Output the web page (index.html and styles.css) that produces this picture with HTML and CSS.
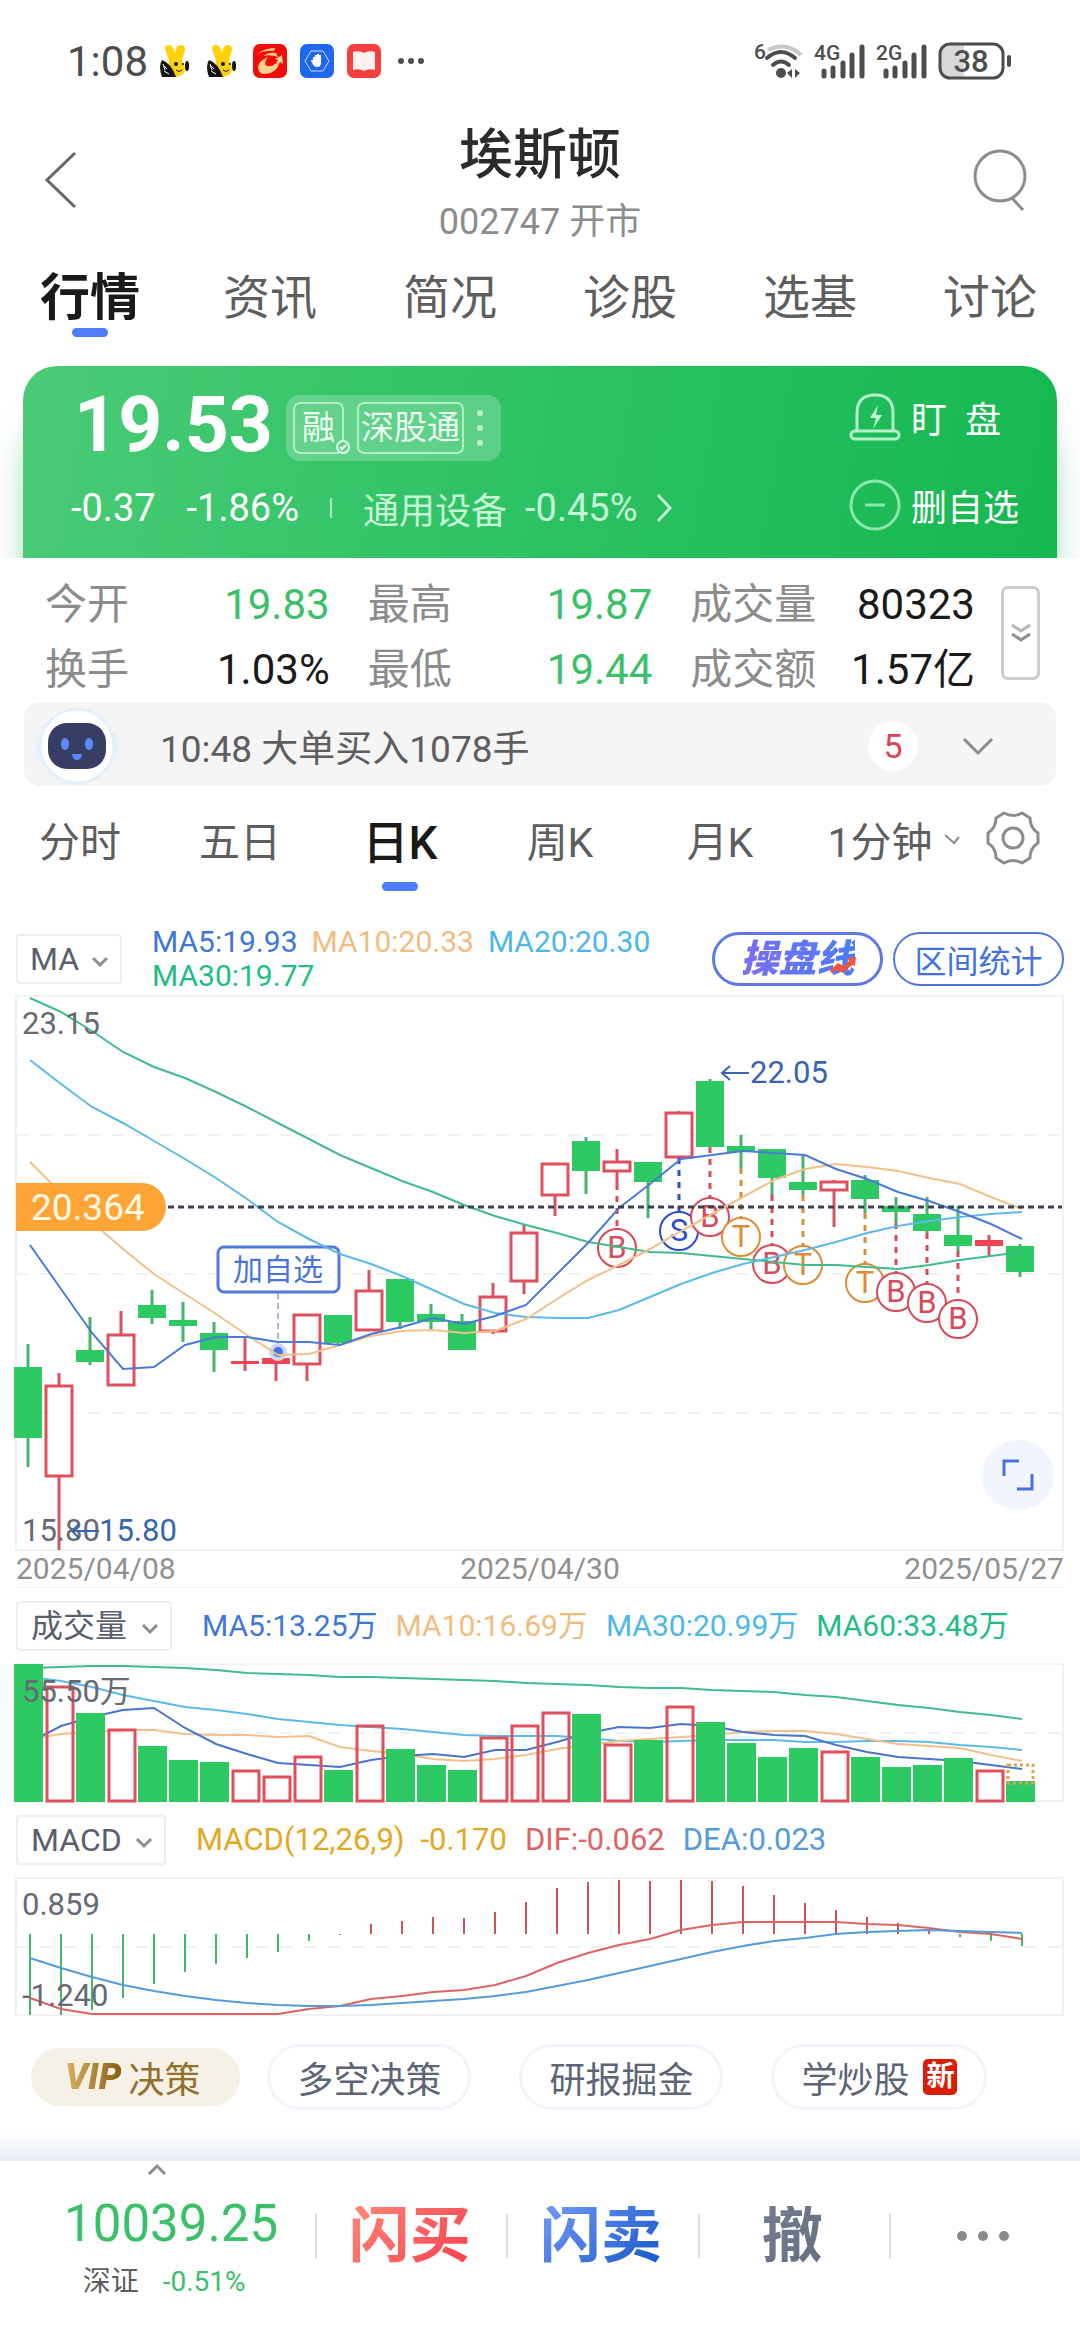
FILE: index.html
```html
<!DOCTYPE html>
<html lang="zh-CN">
<head>
    <meta charset="UTF-8">
    <meta name="viewport" content="width=device-width, initial-scale=1.0">
    <title>埃斯顿 002747</title>
    <link rel="stylesheet" href="styles.css">
</head>
<body>
    <div class="status-bar">
        <span class="clock">1:08</span>
        <div class="status-apps">
            <svg width="34" height="34" viewBox="0 0 34 34">
                <path d="M10 16 6 5Q6 1 10 1q4 0 6 8 1-8 6-8 5 1 4 5l-3 10 3 8q0 8-9 9H8Z" fill="#fdd20a"/>
                <path d="M3 16q9 3 14 17H3Q-1 22 3 16Z" fill="#111"/>
                <path d="M5 22l3 3M5 27l5 3M4 20l2 6" stroke="#fff" stroke-width="1"/>
                <ellipse cx="28" cy="22" rx="2" ry="5" fill="#111"/>
                <circle cx="17" cy="20" r="2" fill="#111"/><circle cx="24" cy="20" r="1" fill="#111"/>
                <path d="M17 26q3 3 6 0" stroke="#111" stroke-width="1" fill="none"/>
            </svg>
            <svg width="34" height="34" viewBox="0 0 34 34">
                <path d="M10 16 6 5Q6 1 10 1q4 0 6 8 1-8 6-8 5 1 4 5l-3 10 3 8q0 8-9 9H8Z" fill="#fdd20a"/>
                <path d="M3 16q9 3 14 17H3Q-1 22 3 16Z" fill="#111"/>
                <path d="M5 22l3 3M5 27l5 3M4 20l2 6" stroke="#fff" stroke-width="1"/>
                <ellipse cx="28" cy="22" rx="2" ry="5" fill="#111"/>
                <circle cx="17" cy="20" r="2" fill="#111"/><circle cx="24" cy="20" r="1" fill="#111"/>
                <path d="M17 26q3 3 6 0" stroke="#111" stroke-width="1" fill="none"/>
            </svg>
            <svg width="34" height="34" viewBox="0 0 34 34">
                <rect width="34" height="34" rx="7" fill="#f40b0b"/>
                <path d="M4 10Q12 4 22 4l-1 3Q12 6 4 10Z" fill="#ffd28a"/>
                <path d="M10 12q6-4 13-3l2 4q-7-3-15-1Z" fill="#ffd28a"/>
                <path d="M5 24q0-7 10-11-5 7-1 9 8 1 11-6l-3-1 7-4 1 9-3-2q-4 12-15 12-6 0-7-6Z" fill="#ffd28a"/>
            </svg>
            <svg width="34" height="34" viewBox="0 0 34 34">
                <rect width="34" height="34" rx="7" fill="#1f66f0"/>
                <path d="M11 7h12l6 10-6 10H11L5 17Z" fill="none" stroke="#cfe0ff" stroke-width="1"/>
                <path d="M13 16v-3h2v3-5h2v4-5h2v5-4h2v8q0 4-4 4-3 0-5-4l-1-3Z" fill="#fff"/>
            </svg>
            <svg width="34" height="34" viewBox="0 0 34 34">
                <rect width="34" height="34" rx="7" fill="#f6403f"/>
                <path d="M6 8q6-2 11 1 5-3 11-1v18q-6-2-11 1-5-3-11-1Z" fill="#fff1f0"/>
            </svg>
            <svg width="30" height="34" viewBox="0 0 30 34" fill="#4d4d4d">
                <circle cx="7" cy="17" r="3"/><circle cx="17" cy="17" r="3"/><circle cx="27" cy="17" r="3"/>
            </svg>
        </div>
        <div class="status-signals">
            <svg width="50" height="38" viewBox="0 0 50 38">
                <path d="M14 8q18-9 33 5" fill="none" stroke="#c8c8c8" stroke-width="4"/>
                <g fill="none" stroke="#4d4d4d" stroke-width="4" stroke-linecap="round">
                    <path d="M13 16q14-12 28 0M19 23q8-7 16 0"/>
                </g>
                <circle cx="27" cy="31" r="5" fill="#4d4d4d"/>
                <path d="M38 27v9l-5-5ZM41 27v9l5-5Z" fill="#4d4d4d"/>
                <text x="0" y="17" class="net-label">6</text>
            </svg>
            <svg width="52" height="38" viewBox="0 0 52 38">
                <path d="M10 29v5M19 26v8M29 21v13M38 13v21M48 5v29" stroke="#4d4d4d" stroke-width="5" stroke-linecap="round"/>
                <text x="0" y="18" class="net-label">4G</text>
            </svg>
            <svg width="52" height="38" viewBox="0 0 52 38">
                <path d="M10 29v5M19 26v8M29 21v13M38 13v21M48 5v29" stroke="#4d4d4d" stroke-width="5" stroke-linecap="round"/>
                <text x="0" y="18" class="net-label">2G</text>
            </svg>
            <svg width="74" height="38" viewBox="0 0 74 38">
                <path d="M12 2h14v34H12Q2 36 2 26V12Q2 2 12 2Z" fill="#d8d8d8"/>
                <rect x="2" y="2" width="63" height="34" rx="10" fill="none" stroke="#4d4d4d" stroke-width="3"/>
                <path d="M71 15v8" stroke="#4d4d4d" stroke-width="4" stroke-linecap="round"/>
                <text x="33" y="30" text-anchor="middle" class="battery-label">38</text>
            </svg>
        </div>
    </div>

    <header class="header">
        <button class="icon-btn" aria-label="返回">
            <svg width="34" height="58" viewBox="0 0 34 58"><path d="M31 2 3 29l28 27" fill="none" stroke="#666" stroke-width="3"/></svg>
        </button>
        <div class="header-title">
            <h1>埃斯顿</h1>
            <p>002747 开市</p>
        </div>
        <button class="icon-btn" aria-label="搜索">
            <svg width="56" height="64" viewBox="0 0 56 64" fill="none" stroke="#8c8c8c" stroke-width="3"><circle cx="28" cy="28" r="25"/><path d="M40 50l11 12"/></svg>
        </button>
    </header>

    <nav class="tabs">
        <a href="#" class="tab active">行情</a>
        <a href="#" class="tab">资讯</a>
        <a href="#" class="tab">简况</a>
        <a href="#" class="tab">诊股</a>
        <a href="#" class="tab">选基</a>
        <a href="#" class="tab">讨论</a>
    </nav>

    <section class="quote-wrap">
        <div class="quote">
            <div class="quote-main">
                <div class="quote-price">
                    <strong>19.53</strong>
                    <div class="tags">
                        <span class="tag tag-check">融
                            <svg width="14" height="14" viewBox="0 0 14 14"><circle cx="7" cy="7" r="6" fill="#62d28b" stroke="#e0fbe9" stroke-width="2"/><path d="M4 7l2 2 4-4" fill="none" stroke="#fff" stroke-width="2"/></svg>
                        </span>
                        <span class="tag">深股通</span>
                        <svg width="6" height="38" viewBox="0 0 6 38" fill="#b9f0cc"><circle cx="3" cy="4" r="3"/><circle cx="3" cy="19" r="3"/><circle cx="3" cy="34" r="3"/></svg>
                    </div>
                </div>
                <div class="quote-change">
                    <span>-0.37</span>
                    <span>-1.86%</span>
                    <i class="quote-sep"></i>
                    <a href="#" class="sector">
                        <span class="sector-name">通用设备</span>
                        <span>-0.45%</span>
                        <svg width="18" height="30" viewBox="0 0 18 30"><path d="M3 2l12 13L3 28" fill="none" stroke="#c5f5d5" stroke-width="3"/></svg>
                    </a>
                </div>
            </div>
            <div class="quote-actions">
                <button class="quote-btn">
                    <svg width="52" height="48" viewBox="0 0 52 48" fill="none" stroke="#b5f0c9" stroke-width="3">
                        <path d="M8 38V20Q8 2 26 2t18 18v18"/><rect x="2" y="38" width="48" height="8" rx="4"/>
                        <path d="M29 12l-8 13h6l-3 11 9-14h-6Z" fill="#c9f6d8" stroke="none"/>
                    </svg>
                    盯&ensp;盘
                </button>
                <button class="quote-btn">
                    <svg width="52" height="52" viewBox="0 0 52 52" fill="none" stroke="#8fe5ae" stroke-width="3"><circle cx="26" cy="26" r="24"/><path d="M16 26h20"/></svg>
                    删自选
                </button>
            </div>
        </div>
    </section>

    <section class="stats">
        <dl class="stats-grid">
            <div class="stat"><dt>今开</dt><dd class="down">19.83</dd></div>
            <div class="stat"><dt>最高</dt><dd class="down">19.87</dd></div>
            <div class="stat"><dt>成交量</dt><dd>80323</dd></div>
            <div class="stat"><dt>换手</dt><dd>1.03%</dd></div>
            <div class="stat"><dt>最低</dt><dd class="down">19.44</dd></div>
            <div class="stat"><dt>成交额</dt><dd>1.57亿</dd></div>
        </dl>
        <button class="stats-more" aria-label="展开">
            <svg width="22" height="20" viewBox="0 0 22 20" fill="none" stroke-width="3"><path d="M2 2l9 6 9-6" stroke="#b5b5b5"/><path d="M2 11l9 6 9-6" stroke="#8c8c8c"/></svg>
        </button>
    </section>

    <section class="notice">
        <svg width="88" height="80" viewBox="0 0 88 80">
            <rect x="2" y="28" width="10" height="26" rx="5" fill="#eaf1fe"/><rect x="76" y="28" width="10" height="26" rx="5" fill="#eaf1fe"/>
            <circle cx="44" cy="40" r="37" fill="#fff" stroke="#e6effd" stroke-width="3"/>
            <rect x="15" y="17" width="58" height="46" rx="19" fill="#383d66"/>
            <ellipse cx="32" cy="38" rx="4" ry="6" fill="#5b8cff"/><ellipse cx="56" cy="38" rx="4" ry="6" fill="#5b8cff"/>
            <path d="M39 48h10q-1 6-5 6t-5-6Z" fill="#5b8cff"/>
        </svg>
        <p>10:48 大单买入1078手</p>
        <span class="notice-count">5</span>
        <button class="icon-btn" aria-label="展开消息">
            <svg width="32" height="20" viewBox="0 0 32 20"><path d="M2 3l14 14L30 3" fill="none" stroke="#8c8c8c" stroke-width="3"/></svg>
        </button>
    </section>

    <nav class="periods">
        <a href="#" class="period">分时</a>
        <a href="#" class="period">五日</a>
        <a href="#" class="period active">日K</a>
        <a href="#" class="period">周K</a>
        <a href="#" class="period">月K</a>
        <a href="#" class="period period-more">1分钟
            <svg width="16" height="12" viewBox="0 0 16 12"><path d="M1 2l9 8 5-6" fill="none" stroke="#8c8c8c" stroke-width="2"/></svg>
        </a>
        <button class="icon-btn" aria-label="设置">
            <svg width="56" height="54" viewBox="0 0 56 54" fill="none" stroke="#8c8c8c" stroke-width="3" stroke-linejoin="round">
                <path d="M19 2q9 5 18 0l8 5q0 10 8 15v10q-8 5-8 15l-8 5q-9-5-18 0l-8-5q0-10-8-15V22q8-5 8-15Z"/>
                <circle cx="28" cy="27" r="10"/>
            </svg>
        </button>
    </nav>

    <div class="indicator-row ma-row">
        <label class="picker">
            <select aria-label="主图指标"><option>MA</option></select>
            <svg width="18" height="12" viewBox="0 0 18 12"><path d="M2 2l7 7 7-7" fill="none" stroke="#8c8c8c" stroke-width="3"/></svg>
        </label>
        <div class="legend legend-ma">
            <span class="c-blue">MA5:19.93</span>
            <span class="c-orange">MA10:20.33</span>
            <span class="c-sky">MA20:20.30</span>
            <span class="c-green">MA30:19.77</span>
        </div>
        <div class="pills">
            <button class="pill pill-line">
                <span>操盘线</span>
                <svg width="30" height="20" viewBox="0 0 30 20"><path d="M2 16l8-7 6 3 5-5-2-3 9-1-1 9-3-1-9 8-6-3-6 3Z" fill="#f4553f"/></svg>
            </button>
            <button class="pill">区间统计</button>
        </div>
    </div>

    <div class="chart-box">
        <svg id="kline" class="chart" viewBox="0 0 1048 555"></svg>
        <button class="expand" aria-label="全屏">
            <svg width="34" height="34" viewBox="0 0 34 34" fill="none" stroke="#4a72e0" stroke-width="3"><path d="M3 18V3h15M31 16v15H16"/></svg>
        </button>
    </div>
    <div class="dates">
        <time>2025/04/08</time>
        <time>2025/04/30</time>
        <time>2025/05/27</time>
    </div>

    <div class="indicator-row">
        <label class="picker picker-sub">
            <select aria-label="副图指标一"><option>成交量</option></select>
            <svg width="18" height="12" viewBox="0 0 18 12"><path d="M2 2l7 7 7-7" fill="none" stroke="#8c8c8c" stroke-width="3"/></svg>
        </label>
        <div class="legend">
            <span class="c-blue">MA5:13.25万</span>
            <span class="c-orange">MA10:16.69万</span>
            <span class="c-sky">MA30:20.99万</span>
            <span class="c-green">MA60:33.48万</span>
        </div>
    </div>
    <div class="chart-box">
        <svg id="volume" class="chart" viewBox="0 0 1048 138"></svg>
    </div>

    <div class="indicator-row">
        <label class="picker picker-sub">
            <select aria-label="副图指标二"><option>MACD</option></select>
            <svg width="18" height="12" viewBox="0 0 18 12"><path d="M2 2l7 7 7-7" fill="none" stroke="#8c8c8c" stroke-width="3"/></svg>
        </label>
        <div class="legend legend-macd">
            <span class="c-gold">MACD(12,26,9)&ensp;-0.170</span>
            <span class="c-red">DIF:-0.062</span>
            <span class="c-dea">DEA:0.023</span>
        </div>
    </div>
    <div class="chart-box">
        <svg id="macd" class="chart" viewBox="0 0 1048 138"></svg>
    </div>

    <div class="chips">
        <button class="chip chip-vip"><em>VIP</em>决策</button>
        <button class="chip">多空决策</button>
        <button class="chip">研报掘金</button>
        <button class="chip">学炒股<span class="chip-new">新</span></button>
    </div>

    <footer class="trade-bar">
        <a href="#" class="index">
            <svg width="20" height="12" viewBox="0 0 20 12"><path d="M2 10l8-8 8 8" fill="none" stroke="#8c8c8c" stroke-width="3"/></svg>
            <strong>10039.25</strong>
            <span class="index-sub"><span>深证</span><span class="down">-0.51%</span></span>
        </a>
        <button class="trade"><span class="trade-buy">闪买</span></button>
        <button class="trade"><span class="trade-sell">闪卖</span></button>
        <button class="trade"><span class="trade-cancel">撤</span></button>
        <button class="trade" aria-label="更多">
            <svg width="56" height="12" viewBox="0 0 56 12" fill="#8c8c8c"><circle cx="7" cy="6" r="5"/><circle cx="28" cy="6" r="5"/><circle cx="49" cy="6" r="5"/></svg>
        </button>
    </footer>

    <script src="charts.js"></script>
</body>
</html>
```
FILE: styles.css
```css
* {
    box-sizing: border-box;
}

body {
    margin: 0;
    background: #fff;
    color: #1a1a1a;
    font-family: Roboto, "Noto Sans CJK SC", sans-serif;
}

h1, p, dl, dd {
    margin: 0;
}

a {
    color: inherit;
    text-decoration: none;
}

button, select {
    font-family: inherit;
    color: inherit;
    background: none;
    border: none;
    margin: 0;
    padding: 0;
    cursor: pointer;
}

svg {
    display: block;
    flex: none;
    overflow: visible;
}

.icon-btn {
    display: flex;
    align-items: center;
    justify-content: center;
}

.down {
    color: #3bc069;
}

/* status bar */
.status-bar {
    display: flex;
    align-items: center;
    height: 92px;
    padding: 30px 68px 0 67px;
    color: #4d4d4d;
}

.clock {
    font-size: 42px;
    margin-right: 11px;
}

.status-apps {
    display: flex;
    gap: 13px;
}

.status-signals {
    display: flex;
    gap: 10px;
    margin-left: auto;
}

.net-label {
    font-size: 21px;
    font-weight: 500;
    fill: #4d4d4d;
}

.battery-label {
    font-size: 31px;
    font-weight: 500;
    fill: #4d4d4d;
}

/* header */
.header {
    display: flex;
    align-items: flex-start;
    justify-content: space-between;
    padding: 34px 44px 0;
}

.header .icon-btn {
    width: 72px;
    height: 108px;
}

.header .icon-btn:first-child {
    justify-content: flex-start;
}

.header-title {
    display: flex;
    flex-direction: column;
    gap: 14px;
    text-align: center;
}

.header-title h1 {
    font-size: 54px;
    line-height: 60px;
    font-weight: 500;
    color: #2b2b2b;
}

.header-title p {
    font-size: 36px;
    line-height: 44px;
    color: #8c8c8c;
}

.tabs {
    display: flex;
    padding-top: 24px;
}

.tab {
    flex: 1;
    display: flex;
    flex-direction: column;
    align-items: center;
    font-size: 47px;
    line-height: 60px;
    color: #5e5e5e;
}

.tab.active {
    font-size: 50px;
    font-weight: 700;
    color: #1a1a1a;
}

.tab.active::after,
.period.active::after {
    content: "";
    width: 36px;
    height: 9px;
    border-radius: 5px;
    background: #4f7df9;
}

/* quote card */
.quote-wrap {
    padding: 29px 23px 0;
    overflow: hidden;
}

.quote {
    display: flex;
    justify-content: space-between;
    padding: 26px 38px 28px 48px;
    border-radius: 34px 34px 0 0;
    background: linear-gradient(100deg, #4bcb76, #2fc365 45%, #14b850);
    box-shadow: 0 60px 36px -8px rgba(40, 170, 90, 0.6);
    color: #fff;
}

.quote-main {
    display: flex;
    flex-direction: column;
    gap: 25px;
    padding-top: 3px;
}

.quote-price {
    display: flex;
    align-items: center;
    gap: 13px;
    height: 66px;
}

.quote-price strong {
    padding-left: 3px;
    margin-bottom: 6px;
    font-size: 77px;
    line-height: 66px;
    font-weight: 700;
}

.tags {
    display: flex;
    align-items: center;
    gap: 13px;
    padding: 7px 18px 7px 7px;
    border-radius: 14px;
    background: rgba(255, 255, 255, 0.22);
}

.tag {
    position: relative;
    padding: 0 7px;
    border: 2px solid #b3edc7;
    border-radius: 7px;
    font-size: 33px;
    line-height: 48px;
    color: #ecfff3;
}

.tag:nth-child(2) {
    padding: 0 2px;
}

.tag-check svg {
    position: absolute;
    right: -8px;
    bottom: -2px;
}

.quote-change {
    display: flex;
    align-items: center;
    gap: 31px;
    height: 44px;
    font-size: 38px;
}

.quote-sep {
    width: 2px;
    height: 20px;
    background: #a6e9bd;
}

.sector {
    display: flex;
    align-items: center;
    gap: 18px;
    color: #c5f5d5;
}

.sector-name {
    font-size: 36px;
}

.quote-actions {
    display: flex;
    flex-direction: column;
    gap: 38px;
}

.quote-btn {
    display: flex;
    align-items: center;
    gap: 10px;
    height: 50px;
    font-size: 36px;
    color: #fff;
}

/* stats */
.stats {
    display: flex;
    align-items: flex-start;
    gap: 26px;
    padding: 14px 40px 0 45px;
}

.stats-grid {
    flex: 1;
    display: grid;
    grid-template-columns: repeat(3, 1fr);
    column-gap: 38px;
}

.stat {
    display: flex;
    justify-content: space-between;
    line-height: 65px;
}

.stat dt {
    font-size: 42px;
    color: #8c8c8c;
}

.stat dd {
    font-size: 42px;
}

.stats-more {
    display: flex;
    align-items: center;
    justify-content: center;
    width: 39px;
    height: 94px;
    margin-top: 14px;
    border: 3px solid #ccc;
    border-radius: 7px;
}

/* notice */
.notice {
    display: flex;
    align-items: center;
    height: 84px;
    margin: 0 24px;
    padding: 4px 62px 0 9px;
    border-radius: 16px;
    background: #f5f5f5;
}

.notice p {
    flex: 1;
    margin-left: 39px;
    font-size: 37px;
    color: #5e5e5e;
}

.notice-count {
    width: 50px;
    margin-right: 44px;
    border-radius: 50%;
    background: #fff;
    font-size: 34px;
    line-height: 50px;
    text-align: center;
    color: #dd4455;
}

/* period tabs */
.periods {
    display: grid;
    grid-template-columns: repeat(6, 4fr) 3fr;
    align-items: start;
    padding-top: 27px;
    height: 106px;
}

.period {
    display: flex;
    flex-direction: column;
    align-items: center;
    gap: 9px;
    font-size: 41px;
    line-height: 60px;
    color: #5e5e5e;
}

.period.active {
    font-size: 46px;
    font-weight: 500;
    color: #1a1a1a;
}

.period-more {
    position: relative;
}

.period-more svg {
    position: absolute;
    right: 0;
    top: 20px;
}

.periods .icon-btn {
    height: 50px;
    padding-right: 14px;
}

/* indicator header rows */
.indicator-row {
    display: flex;
    align-items: center;
    gap: 30px;
    height: 76px;
    padding: 0 16px;
}

.ma-row {
    height: 68px;
    margin: 33px 0 3px;
}

.picker {
    position: relative;
    flex: none;
}

.picker select {
    appearance: none;
    height: 50px;
    padding: 0 40px 0 12px;
    border: 2px solid #eceef3;
    border-radius: 4px;
    font-size: 32px;
    color: #5a5f6e;
}

.picker-sub select {
    padding: 0 42px 0 13px;
}

.picker svg {
    position: absolute;
    right: 13px;
    top: 22px;
    pointer-events: none;
}

.legend {
    display: flex;
    flex-wrap: wrap;
    column-gap: 18px;
    font-size: 30px;
    line-height: 34px;
}

.legend-ma {
    flex: 1;
    column-gap: 14px;
}

.legend-macd {
    font-size: 31px;
}

.c-blue { color: #3f77d8; }
.c-orange { color: #f2bc80; }
.c-sky { color: #4db8e8; }
.c-green { color: #22bd85; }
.c-gold { color: #e2a81f; }
.c-red { color: #dc6464; }
.c-dea { color: #559bda; }

.pills {
    display: flex;
    gap: 10px;
}

.pill {
    position: relative;
    width: 171px;
    height: 54px;
    border: 2px solid #4f77da;
    border-radius: 27px;
    font-size: 32px;
    color: #4472dd;
}

.pill-line {
    border: 3px solid #5f78e4;
}

.pill-line span {
    font-size: 38px;
    line-height: 46px;
    font-weight: 900;
    font-style: italic;
    background: linear-gradient(90deg, #7d6cf0, #4b7dfa);
    -webkit-background-clip: text;
    background-clip: text;
    color: transparent;
}

.pill-line svg {
    position: absolute;
    right: 22px;
    bottom: 9px;
}

/* charts */
.chart-box {
    position: relative;
    margin: 0 16px;
}

.chart {
    width: 100%;
    height: auto;
}

.axis-text {
    font-size: 31px;
    fill: #666a75;
}

.peak-text {
    font-size: 31px;
    fill: #3765ae;
}

.price-text {
    font-size: 37px;
    fill: #fffbe6;
}

.mark-text {
    font-size: 31px;
    text-anchor: middle;
}

.watch-text {
    font-size: 30px;
    fill: #4a74dc;
    text-anchor: middle;
}

.expand {
    position: absolute;
    right: 10px;
    bottom: 41px;
    display: flex;
    align-items: center;
    justify-content: center;
    width: 72px;
    height: 70px;
    border-radius: 50%;
    background: #f1f5fe;
}

.dates {
    display: flex;
    justify-content: space-between;
    margin: 0 16px;
    border-bottom: 1px solid #eceef0;
    font-size: 30px;
    line-height: 36px;
    color: #909090;
}

/* chips */
.chips {
    display: flex;
    align-items: center;
    padding: 28px 31px 23px;
}

.chip {
    display: flex;
    align-items: center;
    height: 66px;
    margin-left: 48px;
    padding: 0 27px;
    border: 3px solid #f1f4fa;
    border-radius: 33px;
    font-size: 36px;
    color: #5c6475;
}

.chip-vip {
    height: 58px;
    margin-left: 0;
    padding: 0 40px 0 34px;
    border: none;
    background: #f6f1e6;
    color: #93702c;
}

.chip-vip + .chip {
    margin-left: 27px;
}

.chip-vip em {
    margin-right: 7px;
    font-weight: 900;
    background: linear-gradient(90deg, #d9b25e, #866018);
    -webkit-background-clip: text;
    background-clip: text;
    color: transparent;
}

.chip-new {
    margin-left: 14px;
    padding: 0 3px;
    border-radius: 5px;
    background: #d81e06;
    color: #fff;
    font-size: 28px;
    font-weight: 700;
    line-height: 36px;
}

/* bottom trade bar */
.trade-bar {
    display: grid;
    grid-template-columns: 315fr repeat(4, 191fr);
    padding: 28px 0 36px;
    background: linear-gradient(#fff, #e6ebf4 28px, #fff 28px);
}

.index {
    display: flex;
    flex-direction: column;
    align-items: center;
    padding: 3px 0 0 27px;
    color: #3bc069;
}

.index > svg {
    margin-right: 28px;
}

.index strong {
    margin-top: 18px;
    font-size: 51px;
    line-height: 60px;
    font-weight: 400;
}

.index-sub {
    display: flex;
    gap: 24px;
    margin-top: 8px;
    padding-right: 14px;
    font-size: 28px;
    line-height: 40px;
}

.index-sub span:first-child {
    color: #5e5e5e;
}

.trade {
    display: flex;
    align-items: center;
    justify-content: center;
    height: 44px;
    margin-top: 53px;
    padding-right: 4px;
    border-left: 2px solid #dcdcdc;
    font-size: 61px;
    line-height: 60px;
    font-weight: 700;
}

.trade span {
    -webkit-background-clip: text;
    background-clip: text;
    color: transparent;
}

.trade-buy { background-image: linear-gradient(135deg, #ff8676, #f7404e); }
.trade-sell { background-image: linear-gradient(135deg, #7599f8, #1557c8); }
.trade-cancel { background-image: linear-gradient(135deg, #747d90, #666e82); }
```
FILE: charts.js
```js
const NS = 'http://www.w3.org/2000/svg';
const RED = '#e0505c';
const GREEN = '#2dc962';
const STEP = 31;

// [direction, high, low, body top, body bottom]
const candles = [
    ['g', 348, 471, 371, 442], ['r', 377, 554, 390, 480], ['g', 321, 369, 354, 366],
    ['r', 315, 389, 339, 389], ['g', 294, 328, 309, 322], ['g', 306, 346, 324, 330],
    ['g', 326, 376, 337, 354], ['r', 340, 375, 365, 368], ['r', 360, 385, 362, 368],
    ['r', 318, 385, 319, 368], ['g', 319, 350, 319, 347], ['r', 274, 335, 295, 334],
    ['g', 283, 333, 283, 326], ['g', 308, 334, 318, 326], ['g', 318, 354, 325, 354],
    ['r', 287, 338, 301, 335], ['r', 229, 298, 237, 285], ['r', 167, 220, 168, 199],
    ['g', 141, 198, 145, 175], ['r', 153, 188, 166, 175], ['g', 166, 222, 166, 186],
    ['r', 115, 162, 117, 161], ['g', 83, 151, 85, 151], ['g', 139, 172, 150, 156],
    ['g', 153, 199, 153, 182], ['g', 159, 199, 186, 194], ['r', 184, 231, 186, 194],
    ['g', 179, 217, 184, 203], ['g', 201, 227, 210, 216], ['g', 201, 237, 218, 235],
    ['g', 210, 255, 239, 250], ['r', 239, 261, 244, 250], ['g', 248, 281, 250, 276]
];

// [candle index, letter, circle y]
const marks = [
    [19, 'B', 252], [21, 'S', 235], [22, 'B', 221], [23, 'T', 241], [24, 'B', 268],
    [25, 'T', 269], [27, 'T', 287], [28, 'B', 296], [29, 'B', 307], [30, 'B', 323]
];
const markColors = { B: '#d84a58', S: '#2d4bd0', T: '#df8a35' };

const klineMa = {
    '#41bb8c': [2, 16, 35, 56, 71, 82, 96, 111, 127, 143, 159, 172, 185, 196, 209, 220, 229, 237, 246, 251, 256, 257, 260, 263, 266, 269, 269, 271, 273, 269, 264, 260, 256],
    '#5cbbe6': [64, 88, 111, 127, 145, 163, 182, 203, 226, 243, 258, 268, 280, 294, 308, 317, 321, 322, 322, 314, 301, 288, 277, 268, 261, 254, 246, 237, 230, 225, 221, 218, 216],
    '#f2c08a': [166, 197, 226, 253, 278, 298, 318, 339, 359, 358, 349, 340, 335, 334, 337, 335, 323, 303, 284, 269, 253, 235, 218, 201, 184, 173, 168, 171, 175, 182, 188, 201, 213],
    '#4a7bd6': [249, 293, 337, 373, 371, 349, 341, 341, 346, 346, 349, 338, 331, 322, 328, 320, 309, 278, 247, 212, 188, 163, 159, 155, 157, 159, 173, 183, 196, 205, 216, 228, 243]
};

// bar tops, colours follow `volumeDir`
const volumes = [0, 22, 49, 65, 82, 96, 98, 106, 112, 92, 106, 61, 85, 101, 106, 73, 61, 48, 50, 80, 76, 42, 58, 79, 93, 84, 87, 93, 103, 101, 94, 106, 117];
const volumeDir = 'grgrgggrrrgrgggrrrgrgrggggrggggrg';
const volumeMa = {
    '#41bb8c': [4, 3, 2, 2, 3, 4, 6, 9, 10, 11, 13, 13, 14, 15, 16, 17, 19, 20, 21, 23, 24, 24, 26, 27, 28, 31, 33, 37, 41, 44, 48, 51, 55],
    '#5cbbe6': [13, 17, 23, 31, 37, 43, 46, 50, 55, 58, 61, 63, 65, 68, 71, 72, 72, 72, 74, 77, 78, 77, 76, 76, 76, 78, 78, 77, 77, 78, 81, 83, 86],
    '#f2c08a': [75, 70, 68, 66, 66, 70, 71, 71, 73, 72, 83, 87, 90, 95, 97, 95, 91, 85, 81, 77, 75, 73, 71, 68, 67, 67, 70, 75, 80, 82, 84, 91, 97],
    '#4a74cc': [78, 62, 53, 46, 44, 64, 80, 90, 99, 101, 103, 96, 92, 90, 93, 86, 86, 78, 69, 63, 64, 60, 62, 68, 71, 72, 81, 88, 93, 95, 97, 101, 105]
};

const macdBars = [137, 137, 132, 120, 106, 94, 86, 80, 74, 63, 57, 46, 43, 39, 40, 34, 24, 10, 4, 2, 3, 2, 3, 8, 17, 25, 32, 39, 45, 53, 59, 63, 68];
const macdLines = {
    '#dc6464': [120, 131, 136, 136, 136, 136, 136, 136, 136, 131, 128, 121, 118, 114, 112, 107, 98, 85, 75, 67, 61, 52, 47, 44, 44, 44, 44, 46, 47, 50, 54, 56, 61],
    '#559bd8': [80, 90, 99, 107, 113, 118, 122, 125, 127, 128, 128, 127, 125, 123, 121, 118, 114, 108, 102, 95, 88, 81, 74, 68, 63, 60, 56, 54, 53, 52, 53, 54, 55]
};
const MACD_ZERO = 56;

function add(svg, name, attrs, text) {
    const el = document.createElementNS(NS, name);
    for (const key in attrs) el.setAttribute(key, attrs[key]);
    if (text) el.textContent = text;
    svg.appendChild(el);
}

function line(svg, x1, y1, x2, y2, stroke, width, dash) {
    const attrs = { x1, y1, x2, y2, stroke, 'stroke-width': width };
    if (dash) attrs['stroke-dasharray'] = dash;
    add(svg, 'line', attrs);
}

function frame(svg, height, grid) {
    add(svg, 'rect', { x: 0, y: 0, width: 1047, height, fill: 'none', stroke: '#eff1f3', 'stroke-width': 2 });
    grid.forEach(y => line(svg, 0, y, 1047, y, '#eff1f5', 2, '12 12'));
}

function curves(svg, set) {
    for (const color in set) {
        const points = set[color].map((y, i) => (14 + STEP * i) + ',' + y).join(' ');
        add(svg, 'polyline', { points, fill: 'none', stroke: color, 'stroke-width': 2 });
    }
}

function drawKline() {
    const svg = document.getElementById('kline');
    frame(svg, 554, [139, 278, 417]);

    candles.forEach(([dir, high, low, top, bottom], i) => {
        const x = 12 + STEP * i;
        const color = dir === 'g' ? '#45b56c' : '#d35560';
        line(svg, x, high, x, top, color, 3);
        line(svg, x, bottom, x, low, color, 3);
        if (dir === 'g') {
            add(svg, 'rect', { x: x - 14, y: top, width: 28, height: bottom - top, fill: GREEN });
        } else if (bottom - top < 8) {
            add(svg, 'rect', { x: x - 14, y: top, width: 28, height: bottom - top, fill: '#f04454' });
        } else {
            add(svg, 'rect', { x: x - 13, y: top, width: 26, height: bottom - top, fill: '#fff', stroke: RED, 'stroke-width': 3 });
        }
    });

    marks.forEach(([i, letter, y]) => {
        const x = 12 + STEP * i;
        const color = markColors[letter];
        line(svg, x, candles[i][2], x, y - 19, color, 3, '6 6');
        add(svg, 'circle', { cx: x, cy: y, r: 19, fill: '#fff', stroke: color, 'stroke-width': 2 });
        add(svg, 'text', { x, y: y + 10, fill: color, class: 'mark-text' }, letter);
    });

    // "added to watchlist" flag
    line(svg, 262, 297, 262, 354, '#a5b7d8', 2, '6 4');
    add(svg, 'circle', { cx: 262, cy: 356, r: 9, fill: '#cdd8f7' });
    add(svg, 'circle', { cx: 262, cy: 356, r: 5, fill: '#4472e6' });
    add(svg, 'rect', { x: 202, y: 251, width: 121, height: 45, rx: 6, fill: '#fff', stroke: '#5079dc', 'stroke-width': 3 });
    add(svg, 'text', { x: 262, y: 284, class: 'watch-text' }, '加自选');

    curves(svg, klineMa);

    line(svg, 142, 211, 1046, 211, '#3a3f52', 3, '6 4');
    add(svg, 'path', { d: 'M0 187H126a24 24 0 0 1 0 48H0Z', fill: '#ffa436' });
    add(svg, 'text', { x: 15, y: 224, class: 'price-text' }, '20.364');

    add(svg, 'text', { x: 6, y: 38, class: 'axis-text' }, '23.15');
    add(svg, 'text', { x: 6, y: 545, class: 'axis-text' }, '15.80');
    add(svg, 'path', { d: 'M83 535H56M63 528l-7 7 7 7', fill: 'none', stroke: '#3765ae', 'stroke-width': 2 });
    add(svg, 'text', { x: 83, y: 545, class: 'peak-text' }, '15.80');
    add(svg, 'path', { d: 'M733 77H706M714 70l-8 7 8 7', fill: 'none', stroke: '#3765ae', 'stroke-width': 2 });
    add(svg, 'text', { x: 734, y: 87, class: 'peak-text' }, '22.05');
}

function drawVolume() {
    const svg = document.getElementById('volume');
    frame(svg, 137, [69]);
    curves(svg, volumeMa);
    volumes.forEach((top, i) => {
        const x = STEP * i - 2;
        if (volumeDir[i] === 'g') {
            add(svg, 'rect', { x, y: top, width: 29, height: 138 - top, fill: GREEN });
        } else {
            add(svg, 'rect', { x: x + 2, y: top + 1, width: 26, height: 136 - top, fill: 'none', stroke: RED, 'stroke-width': 3 });
        }
    });
    add(svg, 'rect', { x: 992, y: 101, width: 25, height: 18, fill: 'none', stroke: '#e2a24a', 'stroke-width': 3, 'stroke-dasharray': '3 3' });
    add(svg, 'text', { x: 6, y: 38, class: 'axis-text' }, '55.50万');
}

function drawMacd() {
    const svg = document.getElementById('macd');
    frame(svg, 137, [69]);
    macdBars.forEach((y, i) => {
        const x = 14 + STEP * i;
        line(svg, x, MACD_ZERO, x, y, y > MACD_ZERO ? '#45b56c' : '#c9525e', 2);
    });
    curves(svg, macdLines);
    add(svg, 'text', { x: 6, y: 37, class: 'axis-text' }, '0.859');
    add(svg, 'text', { x: 6, y: 128, class: 'axis-text' }, '-1.240');
}

drawKline();
drawVolume();
drawMacd();
```
